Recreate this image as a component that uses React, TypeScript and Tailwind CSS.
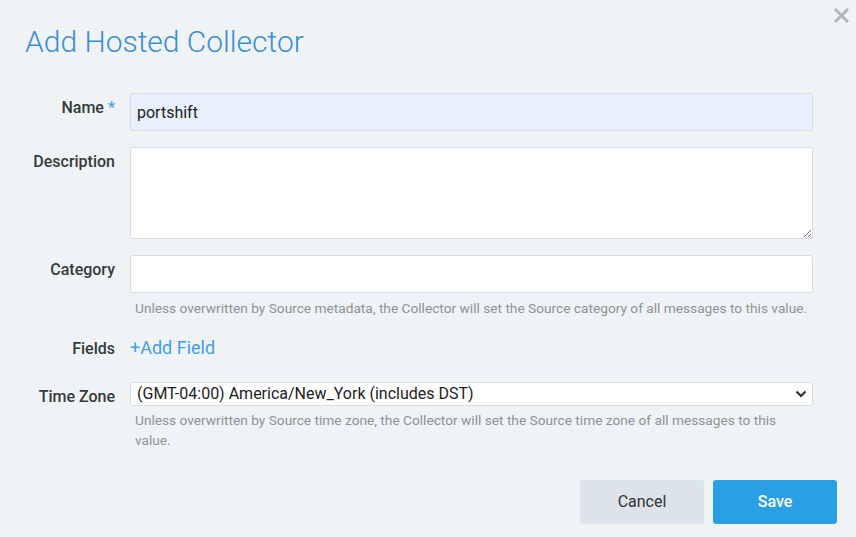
import React from 'react';

const font = { fontFamily: 'Roboto, "Liberation Sans", sans-serif' };

function Label({ children }: { children: React.ReactNode }) {
  return (
    <div className="w-[115px] shrink-0 text-right pt-[3px] text-[16px] leading-6 font-medium text-[#333a40]">
      {children}
    </div>
  );
}

function Help({ children }: { children: React.ReactNode }) {
  return <p className="pl-[5px] text-[13.7px] leading-5 text-[#8b9299]">{children}</p>;
}

export default function App() {
  return (
    <div className="relative min-h-screen w-full bg-[#f0f3f5]" style={font}>
      {/* Close */}
      <button className="absolute left-[833px] top-[7px] w-[17px] h-[17px] flex items-center justify-center">
        <svg width="15" height="15" viewBox="0 0 15 15">
          <path d="M2 2 L13 13 M13 2 L2 13" stroke="#b4b6b8" strokeWidth="3" strokeLinecap="square" />
        </svg>
      </button>

      <div className="pt-[23px]">
        <h1 className="pl-[25px] text-[30px] leading-[38px] font-light text-[#3a8fd2]">Add Hosted Collector</h1>

        {/* Name */}
        <div className="flex mt-[32px]">
          <Label>
            Name <span className="text-[#4aa3e3]">*</span>
          </Label>
          <div className="ml-[15px] w-[683px]">
            <input
              defaultValue="portshift"
              className="w-full h-[38px] pl-[6px] rounded-[3px] border border-[#d6dde5] bg-[#e8f0fe] text-[16px] text-[#222] outline-none"
            />
          </div>
        </div>

        {/* Description */}
        <div className="flex mt-[16px]">
          <Label>Description</Label>
          <div className="ml-[15px] w-[683px]">
            <textarea className="block w-full h-[92px] pl-[6px] rounded-[3px] border border-[#d6dde5] bg-white text-[16px] outline-none" />
          </div>
        </div>

        {/* Category */}
        <div className="flex mt-[16px]">
          <Label>Category</Label>
          <div className="ml-[15px] w-[683px]">
            <input className="w-full h-[38px] pl-[6px] rounded-[3px] border border-[#d6dde5] bg-white text-[16px] outline-none" />
            <div className="mt-[5px]">
              <Help>
                Unless overwritten by Source metadata, the Collector will set the Source category of all messages to this value.
              </Help>
            </div>
          </div>
        </div>

        {/* Fields */}
        <div className="flex items-baseline mt-[18px] h-[24px]">
          <div className="w-[115px] shrink-0 text-right text-[16px] leading-6 font-medium text-[#333a40]">Fields</div>
          <div className="ml-[15px] w-[683px]">
            <a className="text-[18px] leading-6 text-[#3f9fe5] cursor-pointer">+Add Field</a>
          </div>
        </div>

        {/* Time Zone */}
        <div className="flex mt-[22px]">
          <Label>Time Zone</Label>
          <div className="ml-[15px] w-[683px]">
            <div className="relative">
              <select
                defaultValue="ny"
                className="appearance-none w-full h-[24px] pl-[6px] pr-8 rounded-[3px] border border-[#d6dde5] bg-white text-[16px] leading-[22px] text-[#222] outline-none"
              >
                <option value="ny">(GMT-04:00) America/New_York (includes DST)</option>
              </select>
              <svg
                className="absolute right-[6px] top-[8px] pointer-events-none"
                width="12"
                height="8"
                viewBox="0 0 12 8"
              >
                <path d="M1.5 1.5 L6 6 L10.5 1.5" fill="none" stroke="#333" strokeWidth="2.2" />
              </svg>
            </div>
            <div className="mt-[4px]">
              <Help>
                Unless overwritten by Source time zone, the Collector will set the Source time zone of all messages to this value.
              </Help>
            </div>
          </div>
        </div>

        {/* Actions */}
        <div className="flex justify-end gap-[9px] mt-[30px] pr-[19px]">
          <button className="w-[124px] h-[44px] rounded-[3px] bg-[#dde3ea] text-[16px] text-[#333]">Cancel</button>
          <button className="w-[124px] h-[44px] rounded-[3px] bg-[#29a0e5] text-[16px] font-medium text-white">Save</button>
        </div>
      </div>
    </div>
  );
}
